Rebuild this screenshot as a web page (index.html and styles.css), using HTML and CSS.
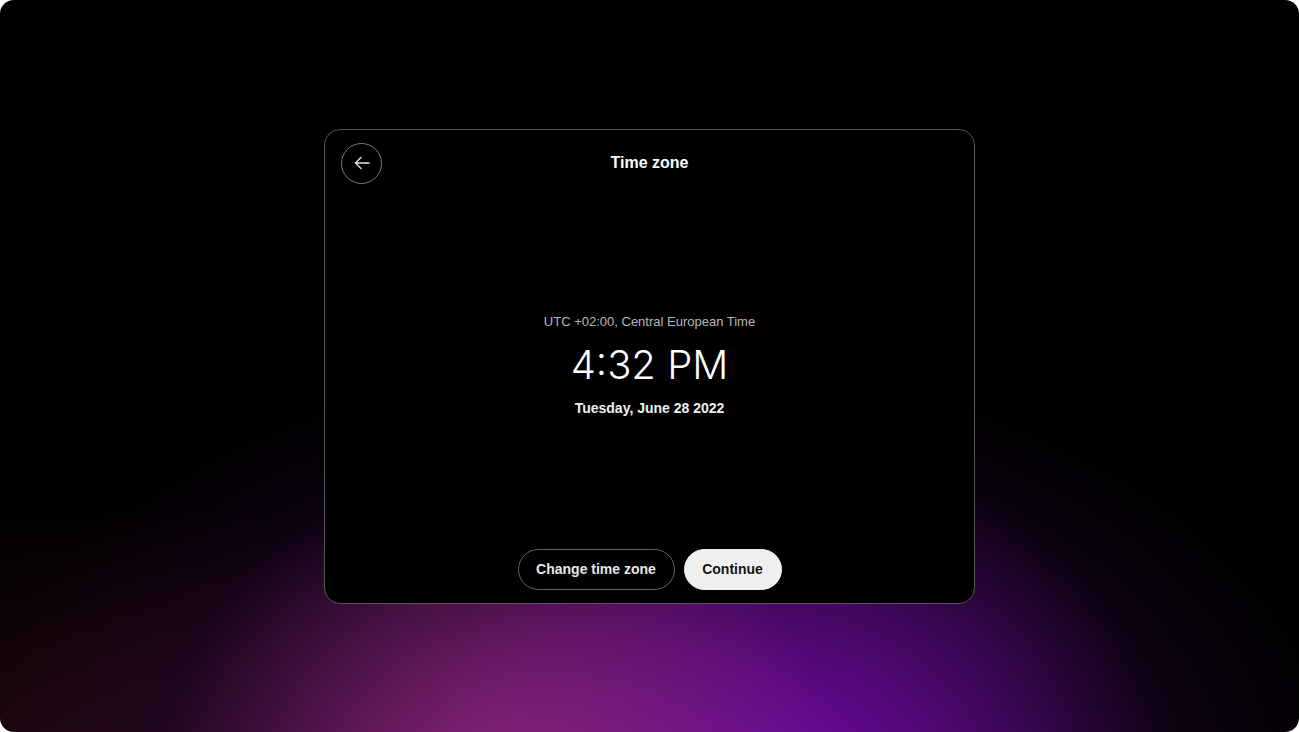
FILE: index.html
```html
<!DOCTYPE html>
<html lang="en">
<head>
<meta charset="utf-8">
<title>Time zone</title>
<link rel="stylesheet" href="styles.css">
</head>
<body>
<div class="screen">
  <div class="card">
    <div class="header">
      <button class="back" aria-label="Back">
        <svg width="20" height="20" viewBox="0 0 20 20" fill="none" stroke="#e8e8e8" stroke-width="1.4" stroke-linecap="round" stroke-linejoin="round">
          <path d="M17 10H3.5"/>
          <path d="M9 4.5L3.5 10L9 15.5"/>
        </svg>
      </button>
      <h1 class="title">Time zone</h1>
      <span class="spacer"></span>
    </div>
    <div class="content">
      <div class="zone">UTC +02:00, Central European Time</div>
      <div class="time">4:32 PM</div>
      <div class="date">Tuesday, June 28 2022</div>
    </div>
    <div class="actions">
      <button class="btn btn-outline">Change time zone</button>
      <button class="btn btn-solid">Continue</button>
    </div>
  </div>
</div>
</body>
</html>
```

FILE: styles.css
```css
html, body {
  margin: 0;
  padding: 0;
  background: #ffffff;
}

body {
  font-family: "Liberation Sans", Arial, sans-serif;
  color: #ffffff;
}

.screen {
  width: 1299px;
  height: 732px;
  border-radius: 14px;
  overflow: hidden;
  display: flex;
  align-items: center;
  justify-content: center;
  background-color: #000;
  background-image:
    radial-gradient(ellipse 340px 320px at 500px 790px, rgba(150, 42, 125, 0.85), rgba(150, 42, 125, 0) 100%),
    radial-gradient(ellipse 380px 350px at 790px 800px, rgba(112, 10, 165, 0.95), rgba(112, 10, 165, 0) 100%),
    radial-gradient(ellipse 700px 440px at 650px 790px, rgba(85, 14, 110, 0.95), rgba(45, 8, 60, 0.55) 60%, rgba(0, 0, 0, 0) 100%),
    radial-gradient(ellipse 500px 260px at 80px 760px, rgba(40, 10, 16, 0.8), rgba(0, 0, 0, 0) 100%);
}

.card {
  box-sizing: border-box;
  width: 651px;
  height: 475px;
  background: #000;
  border: 1px solid #555555;
  border-radius: 16px;
  padding: 13px 16px 13px;
  display: flex;
  flex-direction: column;
}

.header {
  display: grid;
  grid-template-columns: 41px 1fr 41px;
  align-items: center;
  height: 41px;
}

.back {
  box-sizing: border-box;
  width: 41px;
  height: 41px;
  border-radius: 50%;
  border: 1px solid #7a7a7a;
  background: transparent;
  padding: 0;
  display: flex;
  align-items: center;
  justify-content: center;
}

.title {
  margin: 0;
  text-align: center;
  font-size: 16px;
  font-weight: 700;
  color: #ffffff;
}

.content {
  flex: 1;
  display: flex;
  flex-direction: column;
  align-items: center;
  justify-content: center;
  padding-bottom: 2px;
}

.zone {
  font-size: 13px;
  color: #b8b8b8;
  line-height: 16px;
}

.time {
  font-family: "Inter", "Liberation Sans", sans-serif;
  font-weight: 300;
  font-size: 40px;
  line-height: 48px;
  margin-top: 11px;
}

.date {
  font-size: 14px;
  font-weight: 700;
  color: #f0f0f0;
  line-height: 18px;
  margin-top: 10px;
}

.actions {
  display: flex;
  justify-content: center;
  gap: 9px;
}

.btn {
  box-sizing: border-box;
  height: 41px;
  border-radius: 21px;
  font-family: "Liberation Sans", Arial, sans-serif;
  font-size: 14px;
  font-weight: 700;
  padding: 0;
  white-space: nowrap;
}

.btn-outline {
  width: 157px;
  background: transparent;
  color: #e8e8e8;
  border: 1px solid #666666;
}

.btn-solid {
  width: 98px;
  background: #f0f0f0;
  color: #141414;
  border: 1px solid #f0f0f0;
}
```
